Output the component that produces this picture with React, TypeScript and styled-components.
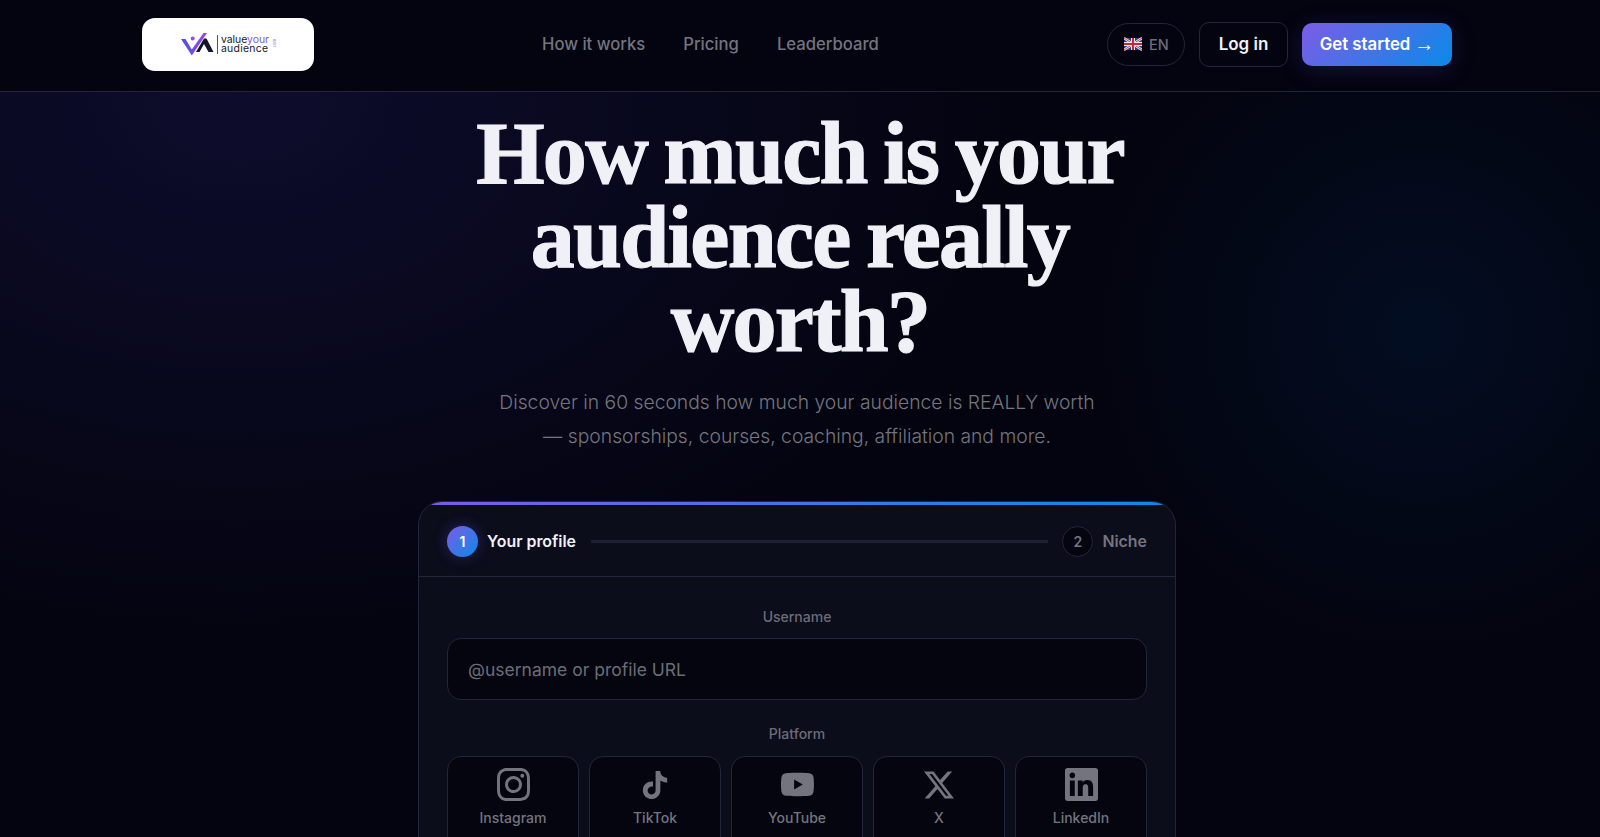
import styled, { createGlobalStyle } from "styled-components";
import { SiInstagram, SiLinkedin, SiTiktok, SiYoutube, SiX } from "react-icons/si";
import type { IconType } from "react-icons";

const GlobalStyle = createGlobalStyle`
  html, body {
    margin: 0;
    height: 100%;
    overflow: hidden;
    background: #04050f;
  }
  * {
    box-sizing: border-box;
  }
`;

const Page = styled.div`
  height: 100vh;
  overflow: hidden;
  font-family: "Inter", "Liberation Sans", sans-serif;
  color: #f0f1f6;
  background:
    radial-gradient(ellipse 800px 550px at 240px 100px, rgba(55, 45, 160, 0.2), transparent),
    radial-gradient(circle 330px at 1420px 330px, rgba(0, 80, 170, 0.12), transparent),
    #03040f;
`;

const Header = styled.header`
  display: flex;
  align-items: center;
  height: 92px;
  padding: 0 148px 3px 142px;
  background: #03040f;
  border-bottom: 1px solid #23263a;
`;

const LogoCard = styled.div`
  display: flex;
  align-items: center;
  justify-content: center;
  gap: 3px;
  width: 172px;
  height: 53px;
  padding-left: 2px;
  background: #fff;
  border-radius: 13px;
`;

const LogoText = styled.div`
  font-size: 10.4px;
  line-height: 9.5px;
  color: #15152b;
  border-left: 1px solid #55556a;
  padding-left: 3px;
  span {
    color: #7a5ce6;
  }
`;

const LogoSecondLine = styled.div`
  letter-spacing: 0.3px;
`;

const LogoDomain = styled.span`
  font-size: 4px;
  writing-mode: vertical-rl;
  transform: rotate(180deg);
  color: #9c86ee;
`;

const Nav = styled.nav`
  display: flex;
  gap: 38px;
  margin-left: 228px;
`;

const NavLink = styled.a`
  font-size: 16.65px;
  font-weight: 500;
  color: #74747f;
`;

const Actions = styled.div`
  display: flex;
  align-items: center;
  margin-left: auto;
`;

const LangButton = styled.div`
  display: flex;
  align-items: center;
  gap: 7px;
  width: 78px;
  height: 43px;
  padding-left: 16px;
  border: 1px solid #23263a;
  border-radius: 22px;
  font-size: 14.5px;
  font-weight: 500;
  color: #6c6c77;
`;

const LoginButton = styled.div`
  display: flex;
  align-items: center;
  justify-content: center;
  width: 89px;
  height: 45px;
  margin-left: 14px;
  border: 1px solid #23263a;
  border-radius: 10px;
  font-size: 17px;
  font-weight: 600;
  color: #f0f1f6;
`;

const StartButton = styled.div`
  display: flex;
  align-items: center;
  justify-content: center;
  gap: 4px;
  width: 150px;
  height: 43px;
  margin-left: 14px;
  border-radius: 10px;
  font-size: 16.8px;
  font-weight: 600;
  color: #fff;
  background: linear-gradient(135deg, #7c5ce6, #0a8ae8);
  box-shadow: 0 4px 24px rgba(100, 80, 230, 0.2);
`;

const Arrow = styled.span`
  font-family: "Liberation Sans", sans-serif;
  font-size: 20px;
  font-weight: 400;
`;

const Hero = styled.main`
  display: flex;
  flex-direction: column;
  align-items: center;
  padding: 20px 6px 0 0;
`;

const Title = styled.h1`
  margin: 0 0 0 6px;
  width: 760px;
  font-family: "Liberation Serif", serif;
  font-size: 88px;
  font-weight: 700;
  line-height: 84px;
  letter-spacing: -1.7px;
  word-spacing: -4px;
  text-align: center;
  color: #f0f1f6;
  -webkit-text-stroke: 1.2px #f0f1f6;
`;

const Subtitle = styled.p`
  margin: 21px 0 0;
  font-size: 19.3px;
  font-weight: 300;
  line-height: 34px;
  text-align: center;
  color: #75757f;
`;

const Card = styled.section`
  position: relative;
  width: 758px;
  margin-top: 48px;
  flex-shrink: 0;
  background: #0b0d1b;
  border: 1px solid #23263a;
  border-radius: 24px;
  overflow: hidden;
  &::before {
    content: "";
    position: absolute;
    top: -1px;
    left: 0;
    right: 0;
    height: 4px;
    background: linear-gradient(90deg, #7c5ce6, #0a8ae8);
  }
`;

const Stepper = styled.div`
  display: flex;
  align-items: center;
  height: 75px;
  padding: 5px 28px 0;
  border-bottom: 1px solid #23263a;
`;

const StepBadge = styled.div<{ $active?: boolean }>`
  display: flex;
  align-items: center;
  justify-content: center;
  width: 31px;
  height: 31px;
  border-radius: 50%;
  font-size: 14px;
  font-weight: 600;
  color: ${(p) => (p.$active ? "#fff" : "#74747f")};
  background: ${(p) => (p.$active ? "linear-gradient(135deg, #7c5ce6, #0a8ae8)" : "#04050f")};
  border: ${(p) => (p.$active ? "none" : "1px solid #23263a")};
  box-shadow: ${(p) => (p.$active ? "0 0 14px rgba(100, 80, 230, 0.35)" : "none")};
`;

const StepLabel = styled.span<{ $active?: boolean }>`
  margin-left: 9px;
  font-size: 15.9px;
  font-weight: 600;
  color: ${(p) => (p.$active ? "#f0f1f6" : "#74747f")};
`;

const StepLine = styled.div`
  flex: 1;
  height: 3px;
  margin: 0 14px 0 15px;
  background: #1e2133;
`;

const Form = styled.div`
  padding: 31px 28px 24px;
`;

const FieldLabel = styled.div`
  font-size: 14px;
  font-weight: 500;
  line-height: 18px;
  text-align: center;
  color: #6c6c77;
`;

const UsernameInput = styled.input`
  display: block;
  width: 100%;
  height: 62px;
  margin: 12px 0 25px;
  padding: 0 20px;
  font-family: inherit;
  font-size: 17.5px;
  color: #f0f1f6;
  background: #04050f;
  border: 1px solid #23263a;
  border-radius: 14px;
  outline: none;
  &::placeholder {
    color: #6c6c77;
    opacity: 1;
  }
`;

const PlatformGrid = styled.div`
  display: grid;
  grid-template-columns: repeat(5, 1fr);
  gap: 10px;
  margin-top: 13px;
`;

const PlatformTile = styled.div`
  display: flex;
  flex-direction: column;
  align-items: center;
  height: 96px;
  padding-top: 11px;
  background: #04050f;
  border: 1px solid #23263a;
  border-radius: 14px;
  color: #74747f;
  font-size: 14px;
  font-weight: 500;
`;

const IconSlot = styled.div`
  display: flex;
  align-items: center;
  justify-content: center;
  height: 33px;
  margin-bottom: 8px;
`;

const platforms: { name: string; icon: IconType; size: number }[] = [
  { name: "Instagram", icon: SiInstagram, size: 33 },
  { name: "TikTok", icon: SiTiktok, size: 28 },
  { name: "YouTube", icon: SiYoutube, size: 33 },
  { name: "X", icon: SiX, size: 30 },
  { name: "LinkedIn", icon: SiLinkedin, size: 33 },
];

const UkFlag = () => (
  <svg width="18" height="14" viewBox="0 0 18 14">
    <rect y="1" width="18" height="12" rx="1.5" fill="#27408b" />
    <path d="M0 1l18 12M18 1L0 13" stroke="#eee" strokeWidth="2.4" />
    <path d="M0 1l18 12M18 1L0 13" stroke="#c8283c" strokeWidth="0.9" />
    <path d="M9 1v12M0 7h18" stroke="#eee" strokeWidth="4" />
    <path d="M9 1v12M0 7h18" stroke="#c8283c" strokeWidth="2.2" />
  </svg>
);

const LogoMark = () => (
  <svg width="33" height="23" viewBox="0 0 33 23">
    <defs>
      <linearGradient id="vaMark" x1="0" y1="0" x2="1" y2="0">
        <stop offset="0" stopColor="#4a55e0" />
        <stop offset="1" stopColor="#a044e8" />
      </linearGradient>
    </defs>
    <path d="M0 6h4.5l6.3 10.5L22.5 0H26L10.8 22.5z" fill="url(#vaMark)" />
    <circle cx="11.7" cy="5.5" r="2" fill="#9a4ce8" />
    <path d="M15 19L23 5.5h2.5L32.5 19h-5l-4.5-8-4.5 8z" fill="#15152b" />
  </svg>
);

export default function App() {
  return (
    <Page>
      <GlobalStyle />
      <Header>
        <LogoCard>
          <LogoMark />
          <LogoText>
            value<span>your</span>
            <LogoSecondLine>audience</LogoSecondLine>
          </LogoText>
          <LogoDomain>.com</LogoDomain>
        </LogoCard>
        <Nav>
          <NavLink>How it works</NavLink>
          <NavLink>Pricing</NavLink>
          <NavLink>Leaderboard</NavLink>
        </Nav>
        <Actions>
          <LangButton>
            <UkFlag />
            EN
          </LangButton>
          <LoginButton>Log in</LoginButton>
          <StartButton>
            Get started <Arrow>→</Arrow>
          </StartButton>
        </Actions>
      </Header>
      <Hero>
        <Title>How much is your audience really worth?</Title>
        <Subtitle>
          Discover in 60 seconds how much your audience is REALLY worth
          <br />— sponsorships, courses, coaching, affiliation and more.
        </Subtitle>
        <Card>
          <Stepper>
            <StepBadge $active>1</StepBadge>
            <StepLabel $active>Your profile</StepLabel>
            <StepLine />
            <StepBadge>2</StepBadge>
            <StepLabel>Niche</StepLabel>
          </Stepper>
          <Form>
            <FieldLabel>Username</FieldLabel>
            <UsernameInput placeholder="@username or profile URL" />
            <FieldLabel>Platform</FieldLabel>
            <PlatformGrid>
              {platforms.map(({ name, icon: Icon, size }) => (
                <PlatformTile key={name}>
                  <IconSlot>
                    <Icon size={size} />
                  </IconSlot>
                  {name}
                </PlatformTile>
              ))}
            </PlatformGrid>
          </Form>
        </Card>
      </Hero>
    </Page>
  );
}
